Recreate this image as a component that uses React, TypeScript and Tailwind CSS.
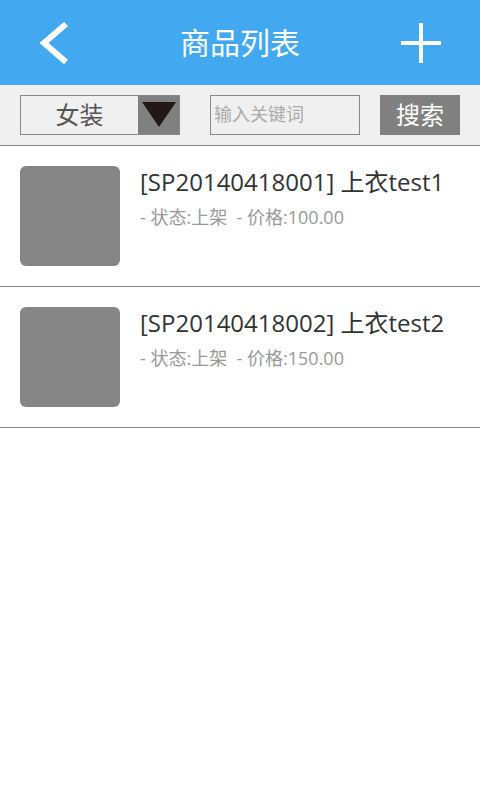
import React from 'react';

interface Product {
  code: string;
  name: string;
  status: string;
  price: string;
}

const products: Product[] = [
  { code: 'SP20140418001', name: '上衣test1', status: '上架', price: '100.00' },
  { code: 'SP20140418002', name: '上衣test2', status: '上架', price: '150.00' },
];

const font = "font-['Open_Sans','Noto_Sans_CJK_SC',sans-serif]";

export default function App() {
  return (
    <div className={`w-[480px] h-[800px] bg-white ${font}`}>
      {/* header */}
      <div className="h-[85px] bg-[#42a8ef] flex items-center justify-between px-[38px]">
        <svg width="42" height="42" viewBox="0 0 42 42">
          <path d="M28 2 L6 21 L28 40" fill="none" stroke="#fff" strokeWidth="6" />
        </svg>
        <h1 className="text-[30px] text-white leading-none">商品列表</h1>
        <svg width="42" height="42" viewBox="0 0 42 42">
          <path d="M21 1 V41 M1 21 H41" fill="none" stroke="#fff" strokeWidth="4" />
        </svg>
      </div>

      {/* filter bar */}
      <div className="h-[61px] bg-[#f0f0f0] border-b border-[#888] flex items-center px-[20px] pb-px">
        <div className="w-[160px] h-[40px] border border-[#888] flex">
          <div className="flex-1 flex items-center justify-center text-[24px] text-[#555]">女装</div>
          <div className="w-[41px] bg-[#808080] flex items-center justify-center">
            <svg width="34" height="25" viewBox="0 0 34 25">
              <path d="M0 0 H34 L17 25 Z" fill="#231815" />
            </svg>
          </div>
        </div>
        <div className="ml-[30px] w-[150px] h-[40px] border border-[#888] flex items-center px-[3px]">
          <span className="text-[18px] text-[#aaa]">输入关键词</span>
        </div>
        <button className="ml-[20px] w-[80px] h-[40px] bg-[#808080] text-white text-[24px] flex items-center justify-center">
          搜索
        </button>
      </div>

      {/* list */}
      {products.map((p) => (
        <div key={p.code} className="h-[141px] border-b border-[#888] flex px-[20px] pt-[20px]">
          <div className="w-[100px] h-[100px] rounded-[6px] bg-[#868686] shrink-0" />
          <div className="ml-[20px]">
            <div className="text-[24px] text-[#333] leading-[32px]">
              [{p.code}] {p.name}
            </div>
            <div className="text-[18px] text-[#999] leading-[24px] mt-[7px]">
              - 状态:{p.status}&nbsp;&nbsp;- 价格:{p.price}
            </div>
          </div>
        </div>
      ))}
    </div>
  );
}
